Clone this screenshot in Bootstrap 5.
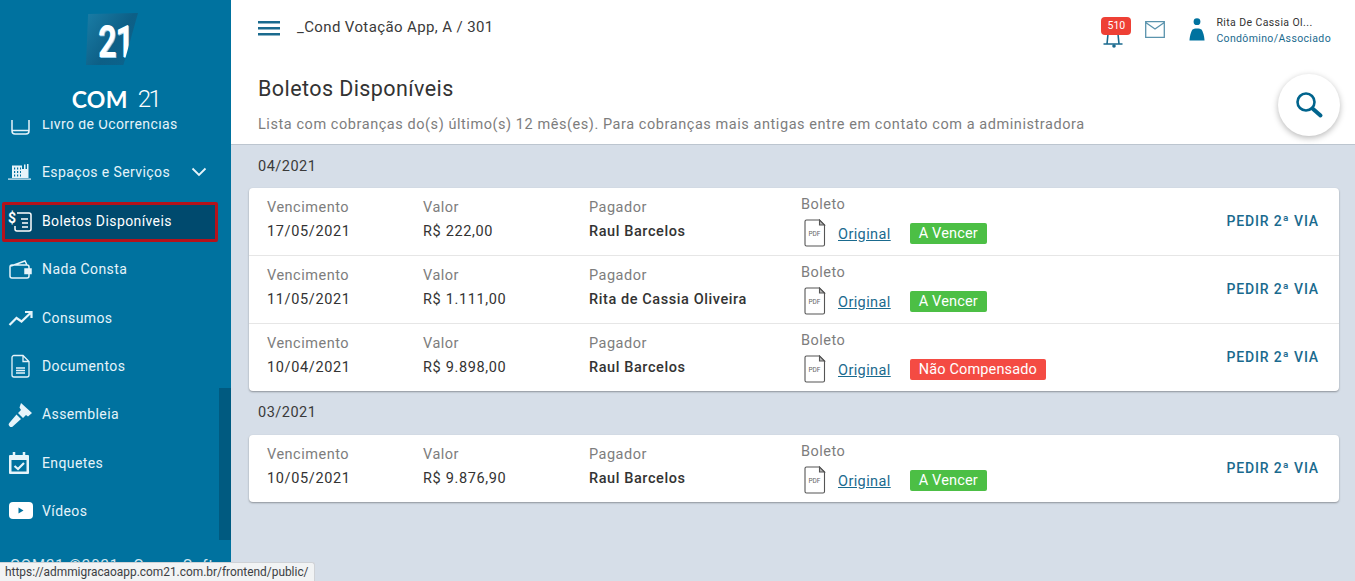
<!DOCTYPE html>
<html lang="pt-BR">
<head>
  <meta charset="UTF-8" />
  <title>Boletos Disponíveis</title>
  <link href="https://cdn.jsdelivr.net/npm/bootstrap@5.3.0/dist/css/bootstrap.min.css" rel="stylesheet"/>
  <style>
    html, body { height: 100%; overflow: hidden; }
    body { font-family: Roboto, "Liberation Sans", sans-serif; background: #d6dee8; color: #333; }
    .app-shell { height: 581px; }

    /* sidebar */
    .side { width: 231px; background: #00729f; color: #e6f4fa; flex: none; overflow: hidden; }
    .side-logo { height: 120px; flex: none; background: #00729f; z-index: 2; }
    .logo-tile { width: 52px; height: 52px; margin-top: 13px; margin-right: 7px; padding: 6px 0 0 6px; background: linear-gradient(125deg, #1a7da6 0%, #0d5f86 55%, #0a6590 100%); clip-path: polygon(4% 2%, 100% 0, 72% 100%, 0 100%); color: #fff; }
    .logo-digits { display: block; font-size: 44px; font-weight: 700; line-height: 46px; letter-spacing: -2px; transform: scaleX(.74); text-shadow: 1px 1px 0 #9fd3ee; }
    .logo-name { margin-top: 23px; line-height: 22px; color: #fff; gap: 10px; }
    .logo-name b { font-family: Lato, sans-serif; font-size: 23px; font-weight: 700; letter-spacing: .3px; }
    .logo-name span { font-size: 24px; font-weight: 300; letter-spacing: -2.5px; }
    .side-body { height: 420px; flex: none; overflow: hidden; }
    .side-list { margin-top: -15px; }
    .side-item { height: 38px; margin: 0 13px 10.3px 2px; padding: 0 0 0 6px; font-size: 14px; letter-spacing: .4px; color: #e6f4fa; text-decoration: none; }
    .side-item svg.ic { width: 26px; height: 26px; flex: none; margin-right: 8px; }
    .side-item.on { height: 40px; margin-bottom: 9.3px; background: #004a6e; border: 3px solid #b5121b; border-radius: 2px; padding-left: 3px; color: #fff; }
    .side-item .chev { width: 16px; height: 10px; margin-left: auto; margin-right: 11px; }
    .scroll-thumb { position: absolute; left: 219px; top: 388px; width: 12px; height: 152px; background: #005a80; z-index: 3; }
    .side-foot { font-size: 15px; letter-spacing: .9px; padding: 14px 0 0 10px; white-space: nowrap; opacity: .9; }
    .url-tip { position: absolute; left: 0; bottom: 0; height: 19px; padding: 0 5px; background: #f1f3f4; border: 1px solid #cfd2d6; border-left: 0; border-bottom: 0; border-radius: 0 3px 0 0; font-size: 11.9px; line-height: 19px; color: #3c4043; z-index: 5; }

    /* top */
    .main-col { min-width: 0; }
    .top-bar { height: 55px; background: #fff; padding: 0 24px 0 27px; flex: none; }
    .burger { width: 22px; height: 16px; margin-right: 17px; }
    .top-title { font-size: 15px; letter-spacing: .38px; color: #3a3a3a; }
    .user-block { margin-top: 6px; }
    .user-name { font-size: 10.5px; line-height: 16px; letter-spacing: .4px; color: #333; }
    .user-role { font-size: 10.5px; line-height: 16px; letter-spacing: .36px; color: #1a6a8e; }
    .bell-box { width: 30px; height: 32px; margin-right: 14px; margin-top: 10px; }
    .bell-num { position: absolute; left: 0; top: 0; width: 30px; height: 18px; background: #ee4035; border-radius: 4px; color: #fff; font-size: 10.5px; line-height: 18px; text-align: center; }
    .mail-ic { margin-right: 24px; margin-top: 3px; }
    .person-ic { margin-right: 11px; margin-top: 3px; }
    .page-head { height: 90px; background: #fff; padding: 20px 15px 0 27px; flex: none; border-bottom: 1px solid #bcc5cf; }
    .page-title { font-size: 21.5px; line-height: 28px; margin: 0; font-weight: 400; letter-spacing: .42px; color: #333; }
    .page-sub { font-size: 14.5px; line-height: 20px; margin-top: 12px; letter-spacing: .56px; color: #7d7d7d; }
    .fab { position: absolute; right: 15px; top: 19px; width: 62px; height: 62px; background: #fff; border-radius: 50%; box-shadow: 0 2px 6px rgba(0,0,0,.28); z-index: 3; }

    /* list */
    .month-label { height: 43px; padding: 0 0 0 27px; font-size: 14.5px; letter-spacing: .5px; color: #3a3a3a; }
    .bill-card + .month-label { height: 44px; }
    .bill-card { margin: 0 16px 0 18px; background: #fff; border-radius: 4px; box-shadow: 0 1px 2px rgba(0,0,0,.35); }
    .bill-row { height: 68px; display: grid; grid-template-columns: 156px 166px 212px 1fr auto; padding: 0 20px 0 18px; border-bottom: 1px solid #e6e6e6; }
    .bill-row:last-child { border-bottom: 0; height: 67px; }
    .lbl { display: block; font-size: 14.5px; line-height: 20px; letter-spacing: .5px; color: #7d7d7d; margin-top: 10px; }
    .lbl-top { margin-top: 7px; }
    .val { display: block; font-size: 14.5px; line-height: 20px; letter-spacing: .65px; color: #333; margin-top: 4px; }
    .payer { font-weight: 500; letter-spacing: .58px; }
    .pdf-line { margin-top: 4px; height: 28px; }
    .pdf-ic { width: 24px; height: 28px; margin-right: 11px; margin-left: 2px; }
    .pdf-link { font-size: 14.5px; letter-spacing: .4px; color: #1a6a8e; margin-right: 19px; margin-top: 4px; }
    .tag { height: 21px; line-height: 21px; padding: 0 9px; border-radius: 2px; color: #fff; font-size: 14.5px; letter-spacing: .15px; }
    .tag-ok { background: #4cbf45; }
    .tag-bad { background: #f44b43; }
    .ask-copy { font-size: 14px; font-weight: 500; letter-spacing: .85px; color: #1a6a8e; align-self: center; }
  </style>
</head>
<body>
  <div class="app-shell d-flex position-relative">

    <!-- Sidebar -->
    <aside class="side d-flex flex-column">
      <div class="side-logo d-flex flex-column align-items-center position-relative">
        <div class="logo-tile text-center"><span class="logo-digits">21</span></div>
        <div class="logo-name d-flex align-items-center"><b>COM</b><span>21</span></div>
      </div>
      <div class="side-body">
        <div class="side-list">
          <a class="side-item d-flex align-items-center" href="#">
            <svg class="ic" viewBox="0 0 26 26" fill="none" stroke="#e6f4fa" stroke-width="1.5"><path d="M4 2v18a3 3 0 0 0 3 3h11a3 3 0 0 0 3-3V2M4 19.500h17"/></svg>Livro de Ocorrências
          </a>
          <a class="side-item d-flex align-items-center" href="#">
            <svg class="ic" viewBox="0 0 26 26" fill="#e6f4fa"><path d="M4 6.500h10V19H4zM14 10h2V5.500h1.500V10H19V5h1.500v14H14z"/><path d="M0 19.500h23v1.200H0z"/><path d="M6 8.500h1.200v2H6zM9 8.500h1.200v2H9zM12 8.500h1v2h-1zM6 12h1.200v2H6zM9 12h1.200v2H9zM12 12h1v2h-1zM6 15.500h1.200v2H6zM9 15.500h1.200v2H9zM12 15.500h1v2h-1z" fill="#00729f"/></svg>Espaços e Serviços
            <svg class="chev" viewBox="0 0 16 10" fill="none" stroke="#e6f4fa" stroke-width="1.8"><path d="M1.500 1.500 8 8l6.500-6.500"/></svg>
          </a>
          <a class="side-item on d-flex align-items-center" href="#">
            <svg class="ic" viewBox="0 0 26 26" fill="none" stroke="#fff" stroke-width="1.500"><path d="M9 4h12a2 2 0 0 1 2 2v14a2 2 0 0 1-2 2H9a2 2 0 0 1-2-2v-3M13 10h7M14 14h6M14 18h6"/><text x="0" y="14" font-size="14" font-weight="700" fill="#fff" stroke="none" font-family="Roboto">$</text></svg>Boletos Disponíveis
          </a>
          <a class="side-item d-flex align-items-center" href="#">
            <svg class="ic" viewBox="0 0 26 26" fill="none" stroke="#e6f4fa" stroke-width="1.500"><path d="M2 10a2 2 0 0 1 2-2h15a2 2 0 0 1 2 2v9a2 2 0 0 1-2 2H4a2 2 0 0 1-2-2zM3 9l14-5 2 4"/><path d="M17 12h6v4.500h-6z" fill="#e6f4fa"/></svg>Nada Consta
          </a>
          <a class="side-item d-flex align-items-center" href="#">
            <svg class="ic" viewBox="0 0 26 26" fill="none" stroke="#e6f4fa" stroke-width="2.200"><path d="M1.500 20l7-7 5 3.500 9-8.500M17 7h6.500v6"/></svg>Consumos
          </a>
          <a class="side-item d-flex align-items-center" href="#">
            <svg class="ic" viewBox="0 0 26 26" fill="none" stroke="#e6f4fa" stroke-width="1.300"><path d="M6 2.500h9l6 6v13.500a2 2 0 0 1-2 2H6a2 2 0 0 1-2-2V4.500a2 2 0 0 1 2-2zM15 2.500v6h6"/><path d="M8 15h9M8 17.500h9M8 20h9"/></svg>Documentos
          </a>
          <a class="side-item d-flex align-items-center" href="#">
            <svg class="ic" viewBox="0 0 26 26" fill="#e6f4fa"><path d="M13 1l11 10-4 3.500-2-1.500-3 3-5-5 3-3-1.500-2.500zM8.500 12.500l4.500 4.500-8 7.200a2.300 2.300 0 0 1-3.500-3.500z"/></svg>Assembleia
          </a>
          <a class="side-item d-flex align-items-center" href="#">
            <svg class="ic" viewBox="0 0 26 26" fill="none" stroke="#e6f4fa"><path d="M2 5h18a1 1 0 0 1 1 1v17a1 1 0 0 1-1 1H2a1 1 0 0 1-1-1V6a1 1 0 0 1 1-1z" fill="#e6f4fa" stroke="none"/><path d="M3.500 10h15v11.500h-15z" fill="#00729f" stroke="none"/><path d="M6 2v5M16 2v5" stroke-width="2.500"/><path d="M6.500 16l3.500 3 6-6" stroke-width="2.200"/></svg>Enquetes
          </a>
          <a class="side-item d-flex align-items-center" href="#">
            <svg class="ic" viewBox="0 0 26 26"><rect x="1" y="4" width="24" height="17" rx="4" fill="#fff"/><path d="M10.500 9.500v6l5-3z" fill="#00729f"/></svg>Vídeos
          </a>
        </div>
      </div>
      <div class="side-foot">COM21 ©2021 - Group Software</div>
    </aside>
    <div class="scroll-thumb"></div>

    <!-- Main -->
    <div class="main-col flex-grow-1 d-flex flex-column">
      <div class="top-bar d-flex align-items-center">
        <svg class="burger" viewBox="0 0 22 16" fill="#1a6a8e"><path d="M0 1h22v2.400H0zM0 7h22v2.400H0zM0 13h22v2.400H0z"/></svg>
        <span class="top-title">_Cond Votação App, A / 301</span>
        <div class="ms-auto d-flex align-items-center">
          <div class="bell-box position-relative">
            <svg width="30" height="32" viewBox="0 0 30 32" fill="none" stroke="#1a6a8e" stroke-width="1.600"><path d="M2.500 27h19M6 27l1-10M18 27l-1-10"/><circle cx="13" cy="29" r="1.800" fill="#1a6a8e" stroke="none"/></svg>
            <span class="bell-num">510</span>
          </div>
          <svg class="mail-ic" width="20" height="17" viewBox="0 0 20 17" fill="none" stroke="#5a93ad" stroke-width="1.300"><path d="M.700.700h18.600v15.600H.700zM.700 1.500l9.300 6.500 9.300-6.500"/></svg>
          <svg class="person-ic" width="16" height="23" viewBox="0 0 16 23" fill="#00729f"><circle cx="8" cy="3.700" r="3.400"/><path d="M.500 22.500c0-1.500.500-7 3-11 1-1.500 8-1.500 9 0 2.500 4 3 9.500 3 11z"/></svg>
          <div class="user-block">
            <div class="user-name">Rita De Cassia Ol...</div>
            <div class="user-role">Condômino/Associado</div>
          </div>
        </div>
      </div>
      <div class="page-head position-relative">
        <h1 class="page-title">Boletos Disponíveis</h1>
        <div class="page-sub">Lista com cobranças do(s) último(s) 12 mês(es). Para cobranças mais antigas entre em contato com a administradora</div>
        <div class="fab d-flex align-items-center justify-content-center">
          <svg width="30" height="30" viewBox="0 0 30 30" fill="none" stroke="#00648d"><circle cx="12" cy="12" r="8.500" stroke-width="2.600"/><path d="M18.500 18.500l8 7" stroke-width="4" stroke-linecap="round"/></svg>
        </div>
      </div>

      <div id="billList"></div>
    </div>

    <div class="url-tip">https://admmigracaoapp.com21.com.br/frontend/public/</div>
  </div>

  <script>
    const months = [
      { label: '04/2021', bills: [
        { due: '17/05/2021', value: 'R$ 222,00', payer: 'Raul Barcelos', status: 'A Vencer', ok: true },
        { due: '11/05/2021', value: 'R$ 1.111,00', payer: 'Rita de Cassia Oliveira', status: 'A Vencer', ok: true },
        { due: '10/04/2021', value: 'R$ 9.898,00', payer: 'Raul Barcelos', status: 'Não Compensado', ok: false }
      ]},
      { label: '03/2021', bills: [
        { due: '10/05/2021', value: 'R$ 9.876,90', payer: 'Raul Barcelos', status: 'A Vencer', ok: true }
      ]}
    ];

    const pdfIcon = `<svg class="pdf-ic" viewBox="0 0 24 28" fill="none" stroke="#555" stroke-width="1.100"><path d="M3.500 1h13l5 5v19.500a1.500 1.500 0 0 1-1.500 1.500h-16.500a1.500 1.500 0 0 1-1.500-1.500v-23a1.500 1.500 0 0 1 1.500-1.500z"/><path d="M16.500 1v5h5z" fill="#bbb"/><text x="5.500" y="17" font-size="6.500" fill="#666" stroke="none" font-family="Roboto">PDF</text></svg>`;

    document.getElementById('billList').innerHTML = months.map(m => `
      <div class="month-label d-flex align-items-center">${m.label}</div>
      <div class="bill-card">
        ${m.bills.map(b => `
          <div class="bill-row">
            <div><span class="lbl">Vencimento</span><span class="val">${b.due}</span></div>
            <div><span class="lbl">Valor</span><span class="val">${b.value}</span></div>
            <div><span class="lbl">Pagador</span><span class="val payer">${b.payer}</span></div>
            <div>
              <span class="lbl lbl-top">Boleto</span>
              <div class="pdf-line d-flex align-items-center">
                ${pdfIcon}
                <a class="pdf-link" href="#">Original</a>
                <span class="tag ${b.ok ? 'tag-ok' : 'tag-bad'}">${b.status}</span>
              </div>
            </div>
            <div class="ask-copy">PEDIR 2ª VIA</div>
          </div>`).join('')}
      </div>`).join('');
  </script>
  <script src="https://cdn.jsdelivr.net/npm/bootstrap@5.3.0/dist/js/bootstrap.bundle.min.js"></script>
</body>
</html>
